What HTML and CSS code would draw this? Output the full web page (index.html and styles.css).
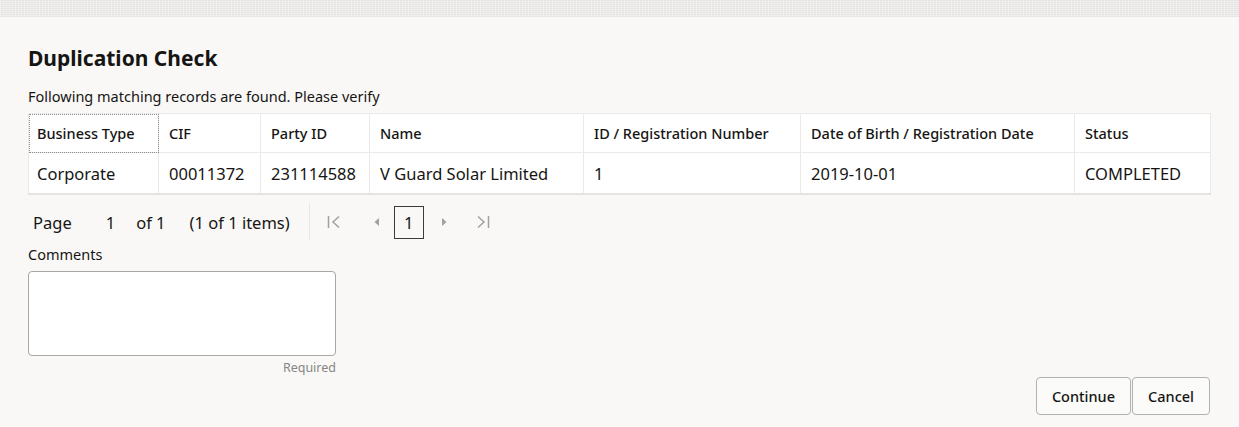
FILE: index.html
```html
<!DOCTYPE html>
<html>
<head>
<meta charset="utf-8">
<link rel="stylesheet" href="styles.css">
</head>
<body>
<div class="band"></div>
<main class="dialog">
  <h1 class="title">Duplication Check</h1>
  <p class="subtitle">Following matching records are found. Please verify</p>
  <table class="grid">
    <colgroup>
      <col class="c1"><col class="c2"><col class="c3"><col class="c4"><col class="c5"><col class="c6"><col class="c7">
    </colgroup>
    <thead>
      <tr>
        <th class="focus">Business Type</th>
        <th>CIF</th>
        <th>Party ID</th>
        <th>Name</th>
        <th>ID / Registration Number</th>
        <th>Date of Birth / Registration Date</th>
        <th>Status</th>
      </tr>
    </thead>
    <tbody>
      <tr>
        <td class="first-col">Corporate</td>
        <td>00011372</td>
        <td>231114588</td>
        <td>V Guard Solar Limited</td>
        <td>1</td>
        <td>2019-10-01</td>
        <td>COMPLETED</td>
      </tr>
    </tbody>
  </table>
  <div class="pager">
    <span class="pg-label">Page</span>
    <span class="pg-num">1</span>
    <span class="pg-of">of 1</span>
    <span class="pg-items">(1 of 1 items)</span>
    <span class="pg-div"></span>
    <span class="pg-icon first"><svg width="14" height="16" viewBox="0 0 14 16"><path d="M1.5 2v12" stroke="#a3a19f" stroke-width="1.5" fill="none"/><path d="M12 2.5L6 8l6 5.5" stroke="#a3a19f" stroke-width="1.5" fill="none"/></svg></span>
    <span class="pg-icon prev"><svg width="8" height="12" viewBox="0 0 8 12"><path d="M6 2L1.5 6L6 10z" fill="#a3a19f"/></svg></span>
    <span class="pg-box">1</span>
    <span class="pg-icon next"><svg width="8" height="12" viewBox="0 0 8 12"><path d="M2 2L6.5 6L2 10z" fill="#a3a19f"/></svg></span>
    <span class="pg-icon last"><svg width="14" height="16" viewBox="0 0 14 16"><path d="M2 2.5L8 8l-6 5.5" stroke="#a3a19f" stroke-width="1.5" fill="none"/><path d="M12.5 2v12" stroke="#a3a19f" stroke-width="1.5" fill="none"/></svg></span>
  </div>
  <div class="field">
    <label class="field-label">Comments</label>
    <div class="textarea"></div>
    <div class="help">Required</div>
  </div>
  <div class="actions">
    <button class="btn">Continue</button>
    <button class="btn">Cancel</button>
  </div>
</main>
</body>
</html>
```

FILE: styles.css
```css
html, body {
  margin: 0;
  padding: 0;
}
body {
  background: #f9f8f7;
  font-family: "Noto Sans", "Open Sans", sans-serif;
  color: #161513;
  width: 1239px;
  height: 427px;
  overflow: hidden;
}
.band {
  height: 17px;
  background-color: #ecebe9;
  background-image:
    repeating-linear-gradient(90deg, rgba(255,255,255,0.35) 0 1px, transparent 1px 3px),
    repeating-linear-gradient(0deg, rgba(0,0,0,0.03) 0 1px, transparent 1px 2px);
}
.dialog {
  padding: 0 29px 0 28px;
}
.title {
  margin: 27px 0 0;
  font-size: 21px;
  line-height: 28px;
  font-weight: 700;
}
.subtitle {
  margin: 14px 0 0;
  font-size: 14.5px;
  line-height: 20px;
}
.grid {
  margin-top: 7px;
  width: 1182px;
  border-collapse: collapse;
  table-layout: fixed;
  background: #fff;
  border-bottom: 2px solid #e4e3e1;
}
.c1 { width: 130px; }
.c2 { width: 102px; }
.c3 { width: 109px; }
.c4 { width: 214px; }
.c5 { width: 217px; }
.c6 { width: 274px; }
.c7 { width: 136px; }
.grid th, .grid td {
  border: 1px solid #ebeae8;
  text-align: left;
  padding: 0 0 0 10px;
  white-space: nowrap;
}
.grid th {
  height: 38px;
  font-size: 14.5px;
  font-weight: 500;
}
.grid td {
  height: 40px;
  font-size: 16.5px;
}
.grid th.focus, .grid td.first-col {
  padding-left: 8px;
}
.grid th.focus {
  outline: 1px dotted #8f8d8b;
  outline-offset: -1px;
}
.pager {
  display: flex;
  align-items: center;
  height: 38px;
  margin-top: 8px;
  font-size: 16.5px;
}
.pg-label { margin-left: 5px; }
.pg-num { margin-left: 34px; }
.pg-of { margin-left: 21px; }
.pg-items { margin-left: 24px; }
.pg-div {
  width: 1px;
  height: 38px;
  background: #e9e8e6;
  margin-left: 19px;
}
.pg-icon { display: inline-flex; }
.first { margin-left: 17px; }
.prev { margin-left: 32px; }
.pg-box {
  margin-left: 13px;
  width: 28px;
  height: 31px;
  border: 1px solid #3c3b39;
  display: inline-flex;
  align-items: center;
  justify-content: center;
  font-size: 16.5px;
}
.next { margin-left: 16px; }
.last { margin-left: 28px; }
.field {
  width: 308px;
  margin-top: 3px;
}
.field-label {
  display: block;
  font-size: 14.5px;
  line-height: 20px;
}
.textarea {
  margin-top: 7px;
  height: 83px;
  background: #fff;
  border: 1px solid #a9a7a5;
  border-radius: 4px;
}
.help {
  text-align: right;
  font-size: 12.5px;
  line-height: 18px;
  color: #888684;
  margin-top: 3px;
}
.actions {
  display: flex;
  justify-content: flex-end;
  gap: 1px;
  margin-top: 0;
}
.btn {
  font-family: inherit;
  font-size: 14.5px;
  font-weight: 500;
  color: #161513;
  background: #fbfbfa;
  border: 1px solid #b3b1af;
  border-radius: 4px;
  height: 38px;
  padding: 0 15px;
}
```
